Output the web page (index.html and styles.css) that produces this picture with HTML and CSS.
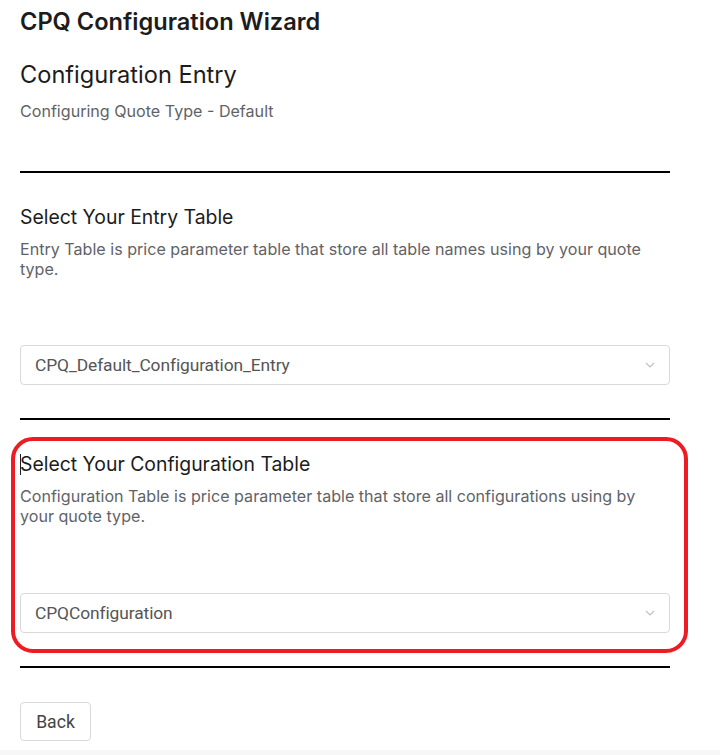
FILE: index.html
```html
<!DOCTYPE html>
<html>
<head>
<meta charset="utf-8">
<link rel="stylesheet" href="styles.css">
</head>
<body>
<main class="page">
  <h1 class="title">CPQ Configuration Wizard</h1>
  <h2 class="step">Configuration Entry</h2>
  <p class="subtitle">Configuring Quote Type - Default</p>
  <hr class="rule rule-first">
  <section class="block">
    <h3 class="block-title">Select Your Entry Table</h3>
    <p class="block-desc">Entry Table is price parameter table that store all table names using by your quote type.</p>
    <div class="select">
      <span class="select-value">CPQ_Default_Configuration_Entry</span>
      <svg class="chev" width="10" height="6" viewBox="0 0 10 6"><path d="M1 1l4 4 4-4" fill="none" stroke="#bfbfbf" stroke-width="1.1"/></svg>
    </div>
  </section>
  <hr class="rule">
  <section class="block">
    <h3 class="block-title"><span class="caret"></span>Select Your Configuration Table</h3>
    <p class="block-desc">Configuration Table is price parameter table that store all configurations using by your quote type.</p>
    <div class="select select-2">
      <span class="select-value">CPQConfiguration</span>
      <svg class="chev" width="10" height="6" viewBox="0 0 10 6"><path d="M1 1l4 4 4-4" fill="none" stroke="#bfbfbf" stroke-width="1.1"/></svg>
    </div>
  </section>
  <hr class="rule">
  <button class="back">Back</button>
  <div class="highlight"></div>
</main>
</body>
</html>
```
FILE: styles.css
```css
html { background: #f7f7f7; }
body {
  margin: 0;
  font-family: Inter, "Noto Sans", sans-serif;
  color: #1f1f1f;
}
.page {
  position: relative;
  background: #fff;
  height: 750px;
  padding: 8px 0 0 20px;
  box-sizing: border-box;
  width: 720px;
}
.title {
  margin: 0;
  font-size: 23.6px;
  line-height: 28px;
  font-weight: 600;
  color: #1c1c1c;
}
.step {
  margin: 25px 0 0;
  font-size: 23.6px;
  line-height: 28px;
  font-weight: 400;
  color: #1c1c1c;
}
.subtitle {
  margin: 12px 0 0;
  font-size: 16.1px;
  line-height: 20px;
  color: #5f6368;
}
.rule {
  width: 650px;
  margin: 33px 0 0;
  border: 0;
  height: 2px;
  background: #000;
}
.rule-first { margin-top: 50px; }
.block { width: 650px; }
.block-title {
  margin: 32px 0 0;
  font-size: 19.4px;
  line-height: 24px;
  font-weight: 400;
  color: #1c1c1c;
  position: relative;
}
.caret {
  position: absolute;
  left: 0;
  top: 2px;
  width: 1px;
  height: 21px;
  background: #1c1c1c;
}
.block-desc {
  margin: 10px 0 0;
  font-size: 16.1px;
  line-height: 20px;
  color: #5f6368;
}
.select {
  margin-top: 66px;
  height: 40px;
  box-sizing: border-box;
  border: 1px solid #d9d9d9;
  border-radius: 4px;
  display: flex;
  align-items: center;
  justify-content: space-between;
  padding: 0 14px 0 14px;
}
.select-2 { margin-top: 67px; }
.select-value {
  font-family: Roboto, sans-serif;
  font-size: 17.4px;
  color: #555;
  letter-spacing: -0.1px;
}
.back {
  margin-top: 34px;
  display: block;
  width: 71px;
  height: 39px;
  background: #fff;
  border: 1px solid #d9d9d9;
  border-radius: 4px;
  font-family: Roboto, sans-serif;
  font-size: 17.6px;
  color: #444;
  padding: 0;
}
.highlight {
  position: absolute;
  left: 11px;
  top: 437px;
  width: 677px;
  height: 216px;
  box-sizing: border-box;
  border: 4px solid #ed1c24;
  border-radius: 22px;
  pointer-events: none;
}
```
